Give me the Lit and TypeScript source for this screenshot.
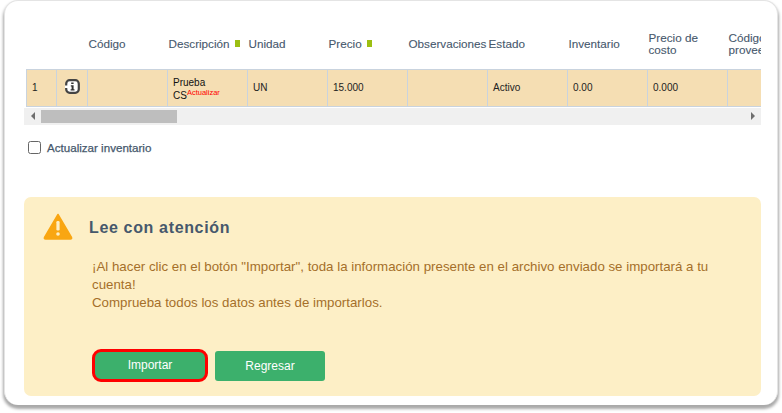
import { LitElement, html, css, svg } from "lit";
import { customElement } from "lit/decorators.js";

const COLS = [
  { t: "", w: 30 }, { t: "", w: 31 }, { t: "Código", w: 80 },
  { t: "Descripción", w: 80, req: true }, { t: "Unidad", w: 80 },
  { t: "Precio", w: 80, req: true }, { t: "Observaciones", w: 80 },
  { t: "Estado", w: 80 }, { t: "Inventario", w: 80 },
  { t: "Precio de costo", w: 80 }, { t: "Código proveedor", w: 80 },
];

@customElement("app-root")
export class AppRoot extends LitElement {
  static styles = css`
    :host { display: block; width: 782px; height: 413px; overflow: hidden; font-family: "Liberation Sans", Arial, sans-serif; background: #fff; }
    .card { box-sizing: border-box; width: 774px; height: 405px; margin-left: 4px; padding: 28px 16px 8px 19px; background: #fff;
      border: 1px solid #e4e4e4; border-bottom: 0; border-radius: 14px; box-shadow: 0 3px 3px 1px #a9a9a9; }
    .scroller { width: 737px; overflow: hidden; }
    table { table-layout: fixed; border-collapse: collapse; width: 781px; margin-left: 2px; }
    th { box-sizing: border-box; height: 40px; padding: 0 2px 10px 1px; font-size: 11.7px; line-height: 12px; font-weight: 400; text-align: left; color: #46586c; vertical-align: middle; -webkit-text-stroke: 0.1px #46586c; }
    th.nowrap { white-space: nowrap; }
    .req { display: inline-block; width: 5px; height: 7px; margin-left: 5px; background: #9cbf12; vertical-align: 1px; }
    td { box-sizing: border-box; height: 37px; padding: 0 5px; background: #f5deb3; border: 1px solid #c9d3de; font-size: 10px; line-height: 13px; color: #222; }
    .desc { color: #111; padding-top: 3px; }
    sup { color: #f00; font-size: 7.5px; line-height: 0; vertical-align: 4px; }
    .info { display: block; margin: -3px auto 0 3px; }
    .scrollbar { display: flex; align-items: center; height: 17px; margin-top: 1px; background: #f0f0f0; }
    .arrow { flex: none; width: 17px; display: flex; justify-content: center; }
    .thumb { flex: none; width: 136px; height: 13px; background: #bebebe; }
    .spacer { flex: 1; }
    .check { display: flex; align-items: center; gap: 6px; margin: 16px 0 0 4px; font-size: 11.6px; color: #46586c; -webkit-text-stroke: 0.25px #46586c; }
    .box { box-sizing: border-box; width: 13px; height: 13px; border: 1px solid #666; border-radius: 2.5px; background: #fff; }
    .alert { box-sizing: border-box; height: 199px; margin-top: 43px; padding: 16px 20px 15px 19px; background: #fdefc6; border-radius: 7px; }
    .head { display: flex; align-items: flex-start; gap: 16px; }
    .head svg { flex: none; }
    h2 { margin: 5px 0 0; font-size: 16px; font-weight: 700; line-height: 20px; letter-spacing: 0.65px; color: #46586c; }
    .body { margin: 18px 0 0 49px; width: 630px; font-size: 13.3px; line-height: 18px; color: #a56f2a; }
    .actions { display: flex; align-items: flex-start; gap: 7px; margin: 37px 0 0 49px; }
    .btn { box-sizing: border-box; display: flex; align-items: center; justify-content: center; height: 30px; border-radius: 3px; background: #3cb06c; color: #fff; font-size: 12px; }
    .import { width: 116px; height: 33px; border: 3px solid #f00; border-radius: 9px; }
    .back { width: 110px; margin-top: 2px; }
  `;

  private tri(dir: "l" | "r") {
    const p = dir === "l" ? "M5 0V8L1 4Z" : "M1 0V8L5 4Z";
    return html`<svg width="6" height="8" viewBox="0 0 6 8"><path d=${p} fill="#6e6e6e"></path></svg>`;
  }

  render() {
    const warn = svg`<path d="M15 1.5 L28.5 24.5 Q29 26 27.5 26 H2.5 Q1 26 1.5 24.5 Z" fill="#f9a612" stroke="#f9a612" stroke-width="1.5" stroke-linejoin="round"></path>
      <rect x="13.4" y="8" width="3.2" height="9.5" rx="1.2" fill="#fdefc6"></rect><circle cx="15" cy="21" r="1.8" fill="#fdefc6"></circle>`;
    return html`
      <div class="card">
        <div class="scroller">
          <table>
            <colgroup>${COLS.map((c) => html`<col style="width:${c.w}px" />`)}</colgroup>
            <thead><tr>
              ${COLS.map((c) => html`<th class=${c.t.includes("Precio de") || c.t.includes("proveedor") ? "" : "nowrap"}>${c.t}${c.req ? html`<span class="req"></span>` : ""}</th>`)}
            </tr></thead>
            <tbody><tr>
              <td>1</td>
              <td><svg class="info" width="15" height="15" viewBox="0 0 15 15">
                <rect x="1.2" y="1.2" width="12.6" height="12.6" rx="3.5" fill="#fff" stroke="#444" stroke-width="2.2"></rect>
                <path d="M0 6.5H3V9H0Z" fill="#fff"></path>
                <path d="M6.2 3.5H8.6V5H6.2ZM5.8 6.2H8.6V10.2H9.5V11.5H5.6V10.2H6.6V7.4H5.8Z" fill="#333"></path>
              </svg></td>
              <td></td>
              <td class="desc">Prueba CS<sup>Actualizar</sup></td>
              <td>UN</td><td>15.000</td><td></td><td>Activo</td><td>0.00</td><td>0.000</td><td></td>
            </tr></tbody>
          </table>
        </div>
        <div class="scrollbar">
          <span class="arrow">${this.tri("l")}</span>
          <span class="thumb"></span>
          <span class="spacer"></span>
          <span class="arrow">${this.tri("r")}</span>
        </div>
        <label class="check"><span class="box"></span>Actualizar inventario</label>
        <section class="alert">
          <div class="head">
            <svg width="30" height="27" viewBox="0 0 30 27">${warn}</svg>
            <h2>Lee con atención</h2>
          </div>
          <p class="body">¡Al hacer clic en el botón "Importar", toda la información presente en el archivo enviado se importará a tu cuenta!<br />Comprueba todos los datos antes de importarlos.</p>
          <div class="actions">
            <div class="btn import">Importar</div>
            <div class="btn back">Regresar</div>
          </div>
        </section>
      </div>
    `;
  }
}
